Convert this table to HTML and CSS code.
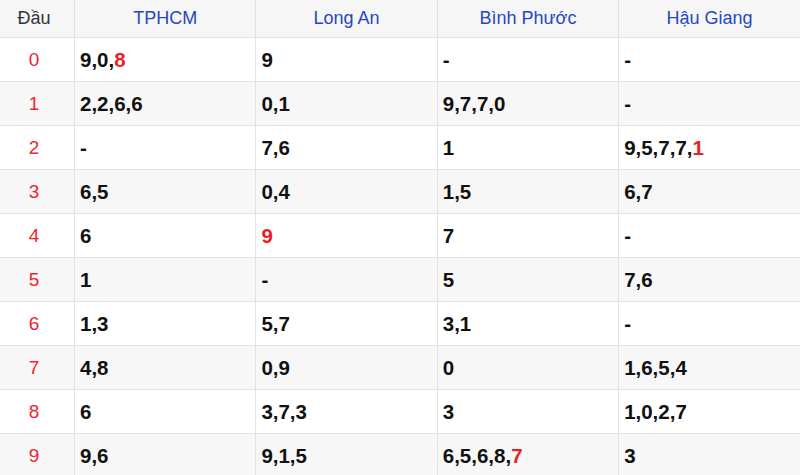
FILE: index.html
```html
<!DOCTYPE html>
<html lang="vi">
<head>
<meta charset="utf-8">
<link rel="stylesheet" href="styles.css">
</head>
<body>
<table class="kq">
  <thead>
    <tr>
      <th class="dau">Đầu</th>
      <th class="prov">TPHCM</th>
      <th class="prov">Long An</th>
      <th class="prov">Bình Phước</th>
      <th class="prov">Hậu Giang</th>
    </tr>
  </thead>
  <tbody>
    <tr><td class="num">0</td><td>9,0,<span class="hl">8</span></td><td>9</td><td>-</td><td>-</td></tr>
    <tr><td class="num">1</td><td>2,2,6,6</td><td>0,1</td><td>9,7,7,0</td><td>-</td></tr>
    <tr><td class="num">2</td><td>-</td><td>7,6</td><td>1</td><td>9,5,7,7,<span class="hl">1</span></td></tr>
    <tr><td class="num">3</td><td>6,5</td><td>0,4</td><td>1,5</td><td>6,7</td></tr>
    <tr><td class="num">4</td><td>6</td><td><span class="hl">9</span></td><td>7</td><td>-</td></tr>
    <tr><td class="num">5</td><td>1</td><td>-</td><td>5</td><td>7,6</td></tr>
    <tr><td class="num">6</td><td>1,3</td><td>5,7</td><td>3,1</td><td>-</td></tr>
    <tr><td class="num">7</td><td>4,8</td><td>0,9</td><td>0</td><td>1,6,5,4</td></tr>
    <tr><td class="num">8</td><td>6</td><td>3,7,3</td><td>3</td><td>1,0,2,7</td></tr>
    <tr><td class="num">9</td><td>9,6</td><td>9,1,5</td><td>6,5,6,8,<span class="hl">7</span></td><td>3</td></tr>
  </tbody>
</table>
</body>
</html>
```
FILE: styles.css
```css
html, body {
  margin: 0;
  padding: 0;
  background: #ffffff;
}
body {
  font-family: "Liberation Sans", Arial, sans-serif;
  overflow: hidden;
}
.kq {
  width: 800px;
  border-collapse: collapse;
  table-layout: fixed;
}
.kq th, .kq td {
  border: 1px solid #e2e2e2;
  padding: 0 5px;
}
.kq tr > :first-child {
  border-left: none;
  width: 64px;
  padding: 0 8px 0 2px;
}
.kq tr > :last-child {
  border-right: none;
}
.kq thead th {
  border-top: none;
  height: 37px;
  font-weight: normal;
  font-size: 18px;
  text-align: center;
  background: #f6f6f6;
}
.kq .dau {
  color: #333333;
}
.kq .prov {
  color: #2647c4;
}
.kq tbody td {
  height: 43px;
  font-size: 20.5px;
  font-weight: bold;
  color: #111111;
  text-align: left;
}
.kq tbody tr:nth-child(even) td {
  background: #f7f7f7;
}
.kq tbody td.num {
  font-weight: normal;
  font-size: 19px;
  color: #ee2530;
  text-align: center;
}
.hl {
  color: #ee1c25;
}
```
